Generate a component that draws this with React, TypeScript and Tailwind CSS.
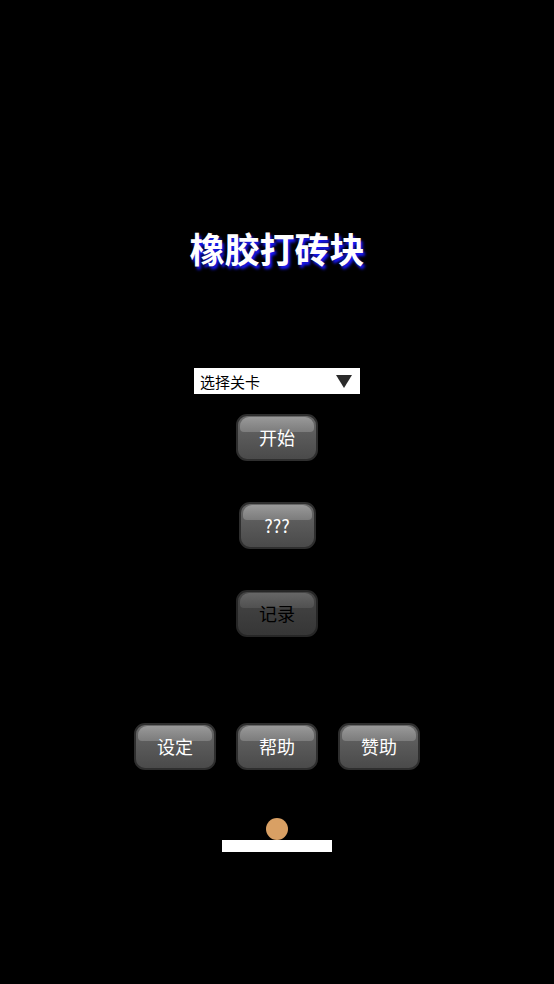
import React from "react";

function GlossButton({ label, w = 82, dark = false }: { label: string; w?: number; dark?: boolean }) {
  return (
    <div
      className={`relative h-[47px] rounded-[11px] border-2 ${dark ? "border-[#262626] bg-gradient-to-b from-[#464646] to-[#363636]" : "border-[#2e2e2e] bg-gradient-to-b from-[#686868] to-[#4a4a4a]"} overflow-hidden shadow-[0_0_2px_#000]`}
      style={{ width: w }}
    >
      <div
        className={`absolute left-[2px] right-[2px] top-[1px] h-[15px] rounded-t-[9px] rounded-b-[4px] ${dark ? "bg-gradient-to-b from-[#666] to-[#505050]" : "bg-gradient-to-b from-[#999] to-[#7c7c7c]"}`}
      />
      <div
        className={`relative flex h-full items-center justify-center text-[18px] ${dark ? "text-black" : "text-white"}`}
        style={{ fontFamily: '"Noto Sans CJK SC", "DejaVu Sans", sans-serif' }}
      >
        {label}
      </div>
    </div>
  );
}

export default function App() {
  return (
    <div className="flex min-h-[984px] w-full flex-col items-center bg-black" style={{ fontFamily: '"Noto Sans CJK SC", sans-serif' }}>
      <div
        className="mt-[228px] h-[40px] text-[35px] font-bold leading-[40px] text-white [text-shadow:2px_3px_3px_#1a1aff]"
        style={{ fontFamily: '"Noto Sans CJK SC", sans-serif' }}
      >
        橡胶打砖块
      </div>
      <div className="mt-[100px] flex h-[26px] w-[166px] items-center justify-between bg-white pl-[6px] pr-[8px]">
        <span className="text-[15px] leading-none text-black">选择关卡</span>
        <svg width="16" height="13" viewBox="0 0 16 13">
          <polygon points="0,0 16,0 8,13" fill="#2a2a2a" />
        </svg>
      </div>
      <div className="mt-[20px]">
        <GlossButton label="开始" />
      </div>
      <div className="mt-[41px]">
        <GlossButton label="???" w={77} />
      </div>
      <div className="mt-[41px]">
        <GlossButton label="记录" dark />
      </div>
      <div className="mt-[86px] flex gap-[20px]">
        <GlossButton label="设定" />
        <GlossButton label="帮助" />
        <GlossButton label="赞助" />
      </div>
      <div className="mt-[48px] h-[22px] w-[22px] rounded-full bg-[#d9a064]" />
      <div className="h-[12px] w-[110px] bg-white" />
    </div>
  );
}
